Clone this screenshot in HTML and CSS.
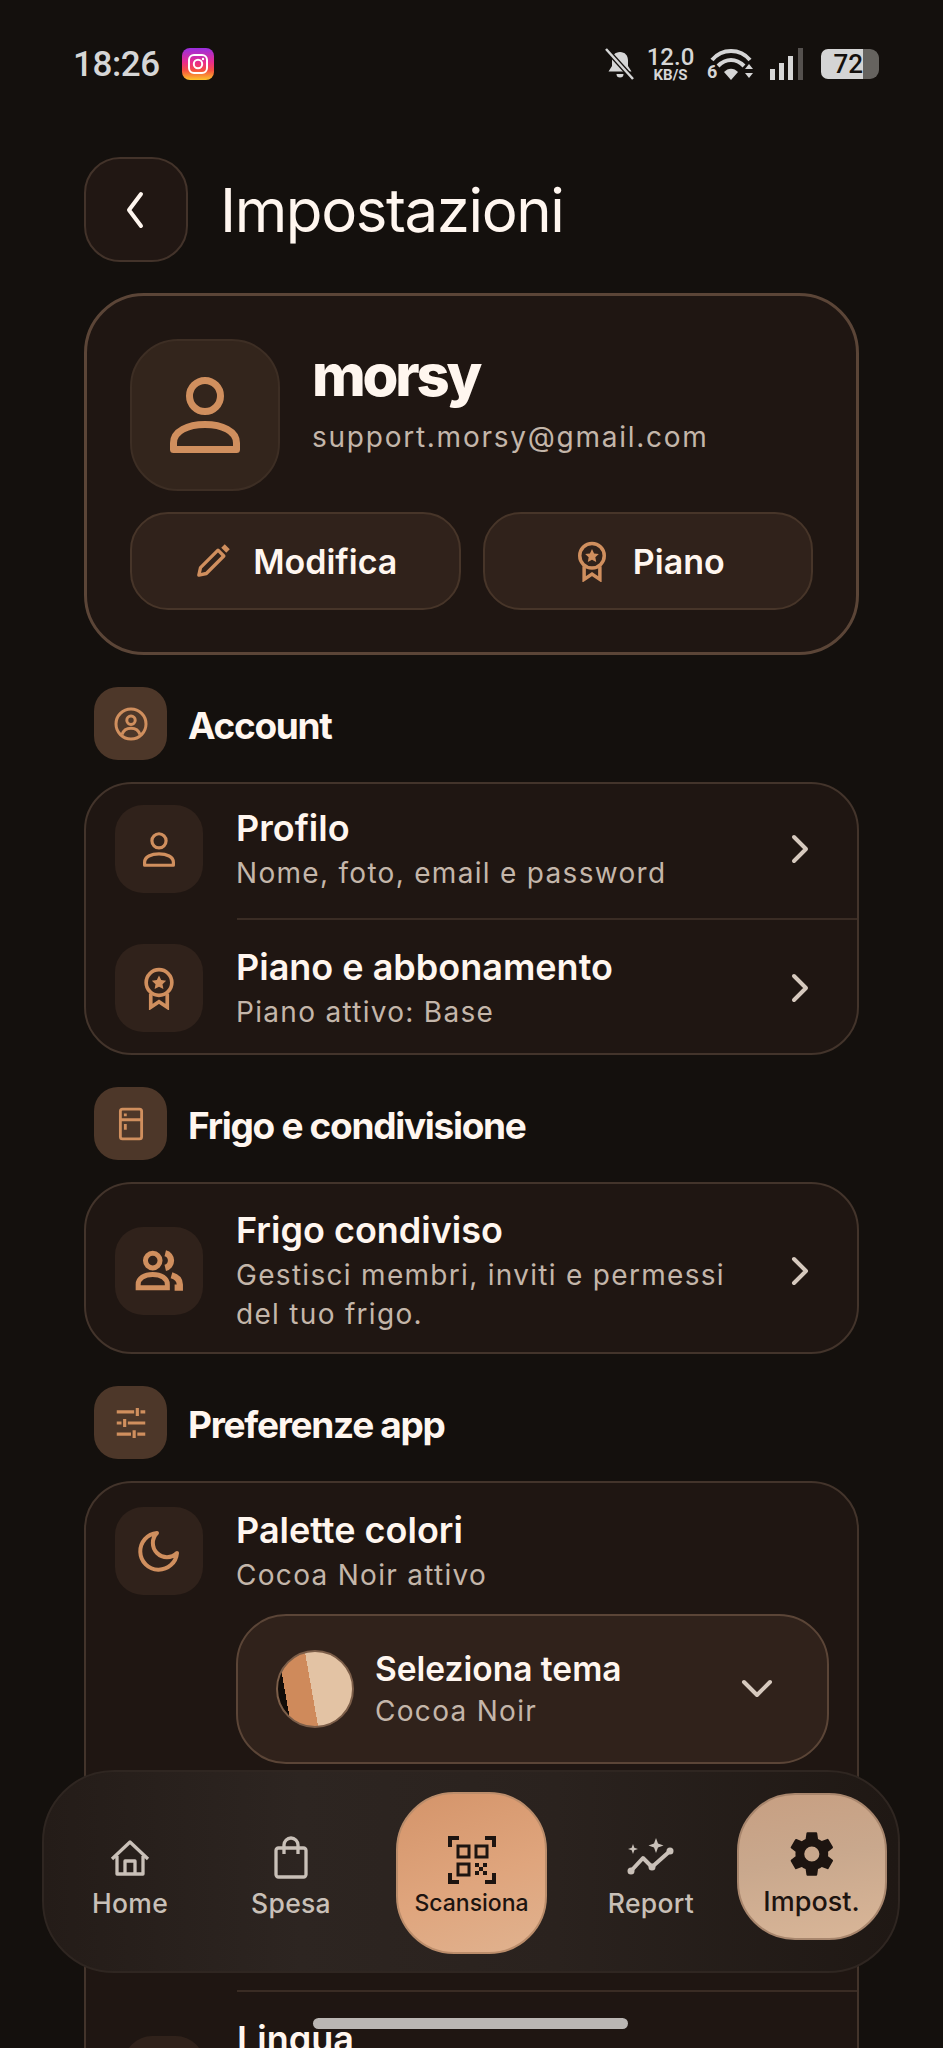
FILE: index.html
```html
<!DOCTYPE html>
<html lang="it">
<head>
    <meta charset="utf-8">
    <title>Impostazioni</title>
    <meta name="viewport" content="width=device-width, initial-scale=1.0">
    <link rel="stylesheet" href="styles.css">
</head>
<body>
<div class="screen">

    <div class="status">
        <span class="time">18:26</span>
        <span class="insta">
            <svg viewBox="0 0 32 32" width="32" height="32"><rect x="7" y="7" width="18" height="18" rx="5" fill="none" stroke="#fff" stroke-width="2"/><circle cx="16" cy="16" r="4.2" fill="none" stroke="#fff" stroke-width="2"/><circle cx="21" cy="11" r="1.2" fill="#fff"/></svg>
        </span>
        <div class="status-right">
            <svg class="st-bell" viewBox="0 0 32 32" width="32" height="32"><path d="M16 4c-5 0-8 3.500-8 8.500V18l-3.500 5.500h23L24 18v-5.500C24 7.500 21 4 16 4z" fill="#d6d6d6"/><path d="M12.500 26h7a3.500 3.500 0 0 1-7 0z" fill="#d6d6d6"/><path d="M2 1l27 30" stroke="#14100d" stroke-width="5"/><path d="M2 1l27 30" stroke="#d6d6d6" stroke-width="2.500"/></svg>
            <div class="speed"><span class="speed-num">12.0</span><span class="speed-unit">KB/S</span></div>
            <div class="wifi">
                <span class="wifi-six">6</span>
                <svg viewBox="0 0 48 32" width="48" height="32"><path d="M5 12C15 0 33 0 43 12" fill="none" stroke="#d6d6d6" stroke-width="4"/><path d="M11 18c8-8 18-8 26 0" fill="none" stroke="#d6d6d6" stroke-width="4"/><path d="M17 24c4-4.500 10-4.500 14 0l-7 8z" fill="#d6d6d6"/><path d="M38 21l4-5 4 5zM38 25l4 5 4-5z" fill="#d6d6d6"/></svg>
            </div>
            <svg class="st-signal" viewBox="0 0 34 32" width="34" height="32"><rect x="0" y="21" width="5" height="11" fill="#d6d6d6"/><rect x="9" y="15" width="5" height="17" fill="#d6d6d6"/><rect x="18" y="8" width="5" height="24" fill="#d6d6d6"/><rect x="28" y="0" width="5" height="32" fill="#55514e"/></svg>
            <div class="battery"><span class="battery-fill">72</span><span class="battery-rest"></span></div>
        </div>
    </div>

    <main class="content">
        <div class="page-head">
            <div class="back">
                <svg viewBox="0 0 32 40" width="32" height="40"><path d="M21 4L9 20l12 16" fill="none" stroke="#fff6ef" stroke-width="4" stroke-linecap="round" stroke-linejoin="round"/></svg>
            </div>
            <h1>Impostazioni</h1>
        </div>

        <section class="profile">
            <div class="profile-top">
                <div class="avatar">
                    <svg class="ico" viewBox="0 0 70 76" width="70" height="76"><circle cx="35" cy="19" r="15.500" stroke-width="7"/><path d="M3.500 72.500V66C3.500 54 18 47.500 35 47.500S66.500 54 66.500 66v6.500z" stroke-width="7" stroke-linejoin="round"/></svg>
                </div>
                <div class="who">
                    <div class="who-name">morsy</div>
                    <div class="who-mail">support.morsy@gmail.com</div>
                </div>
            </div>
            <div class="profile-btns">
                <div class="btn">
                    <svg class="ico" viewBox="0 0 24 24" width="40" height="40"><path d="M3.500 20.500l1-4.500L15 5.500 18.500 9 8 19.500z" stroke-linejoin="round"/><path d="M18 3l3 3" stroke-width="3"/></svg>
                    Modifica
                </div>
                <div class="btn">
                    <svg class="ico" viewBox="0 0 24 24" width="42" height="42"><circle cx="12" cy="9" r="7"/><path d="M12 5.200l1.200 2.500 2.700.3-2 1.900.5 2.700-2.400-1.300-2.400 1.300.5-2.700-2-1.900 2.700-.3z" fill="#d08f5e" stroke="none"/><path d="M7.500 15v7.500l4.500-3 4.500 3V15"/></svg>
                    Piano
                </div>
            </div>
        </section>

        <div class="sec-head">
            <div class="sec-ico">
                <svg class="ico" viewBox="0 0 24 24" width="36" height="36"><circle cx="12" cy="12" r="10"/><circle cx="12" cy="9.500" r="2.800"/><path d="M6 19c1-3 3.400-4.200 6-4.200s5 1.200 6 4.200"/></svg>
            </div>
            <h2>Account</h2>
        </div>
        <section class="card">
            <div class="row">
                <div class="row-ico">
                    <svg class="ico" viewBox="0 0 70 76" width="32" height="35"><circle cx="35" cy="19" r="15.500" stroke-width="7"/><path d="M3.500 72.500V66C3.500 54 18 47.500 35 47.500S66.500 54 66.500 66v6.500z" stroke-width="7" stroke-linejoin="round"/></svg>
                </div>
                <div class="row-text">
                    <div class="row-title">Profilo</div>
                    <div class="row-sub">Nome, foto, email e password</div>
                </div>
                <svg class="chev" viewBox="0 0 32 32" width="32" height="32"><path d="M9 4l12 12L9 28" fill="none" stroke="#d6c9be" stroke-width="4" stroke-linecap="round" stroke-linejoin="round"/></svg>
            </div>
            <div class="row row-next">
                <div class="row-ico">
                    <svg class="ico" viewBox="0 0 24 24" width="44" height="44"><circle cx="12" cy="9" r="7"/><path d="M12 5.200l1.200 2.500 2.700.3-2 1.900.5 2.700-2.400-1.300-2.400 1.300.5-2.700-2-1.900 2.700-.3z" fill="#d08f5e" stroke="none"/><path d="M7.500 15v7.500l4.500-3 4.500 3V15"/></svg>
                </div>
                <div class="row-text">
                    <div class="row-title">Piano e abbonamento</div>
                    <div class="row-sub">Piano attivo: Base</div>
                </div>
                <svg class="chev" viewBox="0 0 32 32" width="32" height="32"><path d="M9 4l12 12L9 28" fill="none" stroke="#d6c9be" stroke-width="4" stroke-linecap="round" stroke-linejoin="round"/></svg>
            </div>
        </section>

        <div class="sec-head">
            <div class="sec-ico">
                <svg class="ico" viewBox="0 0 24 24" width="34" height="34"><rect x="4.500" y="1.500" width="15" height="21" rx="1.500"/><path d="M4.500 9h15M8 4.500v2M8 12v4"/></svg>
            </div>
            <h2>Frigo e condivisione</h2>
        </div>
        <section class="card">
            <div class="row row-solo">
                <div class="row-ico">
                    <svg class="ico" viewBox="0 0 24 24" width="50" height="50"><circle cx="9" cy="7" r="3.500" stroke-width="2.400"/><path d="M2 20v-1.500c0-3 3-4.800 7-4.800s7 1.800 7 4.800V20z" stroke-width="2.400"/><path d="M15 3.500a3.600 3.600 0 0 1 0 7M18 14c2.500.7 4 2.200 4 4.500V20h-2.500" stroke-width="3"/></svg>
                </div>
                <div class="row-text">
                    <div class="row-title">Frigo condiviso</div>
                    <div class="row-sub">Gestisci membri, inviti e permessi<br>del tuo frigo.</div>
                </div>
                <svg class="chev" viewBox="0 0 32 32" width="32" height="32"><path d="M9 4l12 12L9 28" fill="none" stroke="#d6c9be" stroke-width="4" stroke-linecap="round" stroke-linejoin="round"/></svg>
            </div>
        </section>

        <div class="sec-head">
            <div class="sec-ico">
                <svg class="ico" viewBox="0 0 24 24" width="38" height="38"><path d="M3 5h11M18 5h3M16 2.500v5M3 12h3M10 12h11M8 9.500v5M3 19h9M16 19h5M14 16.500v5"/></svg>
            </div>
            <h2>Preferenze app</h2>
        </div>
        <section class="card">
            <div class="row row-palette">
                <div class="row-ico">
                    <svg class="ico" viewBox="0 0 24 24" width="48" height="48"><path d="M11 3a7 7 0 0 0 10 10 9.200 9.200 0 1 1-10-10z" stroke-linejoin="round"/></svg>
                </div>
                <div class="row-main">
                    <div class="row-text">
                        <div class="row-title">Palette colori</div>
                        <div class="row-sub">Cocoa Noir attivo</div>
                    </div>
                    <div class="picker">
                        <div class="swatch"></div>
                        <div class="picker-text">
                            <div class="picker-title">Seleziona tema</div>
                            <div class="picker-sub">Cocoa Noir</div>
                        </div>
                        <svg class="picker-chev" viewBox="0 0 32 22" width="32" height="22"><path d="M3 4l13 13L29 4" fill="none" stroke="#d6c9be" stroke-width="4" stroke-linecap="round" stroke-linejoin="round"/></svg>
                    </div>
                </div>
            </div>
            <div class="row row-next row-lang">
                <div class="row-ico row-ico-low"></div>
                <div class="row-text">
                    <div class="row-title">Lingua</div>
                </div>
            </div>
        </section>
    </main>

    <nav class="tabbar">
        <div class="tab">
            <svg viewBox="0 0 40 40" width="40" height="40"><path d="M2 21L20 4l18 17M7 18v18h26V18M15 36V23h10v13" fill="none" stroke="#c9c0b8" stroke-width="3.300" stroke-linejoin="round"/></svg>
            <span>Home</span>
        </div>
        <div class="tab">
            <svg viewBox="0 0 40 42" width="40" height="42"><rect x="5" y="11" width="30" height="29" rx="2.500" fill="none" stroke="#c9c0b8" stroke-width="3.300"/><path d="M13 17V8a7 7 0 0 1 14 0v9" fill="none" stroke="#c9c0b8" stroke-width="3.300"/></svg>
            <span>Spesa</span>
        </div>
        <div class="tab tab-scan">
            <svg viewBox="0 0 48 48" width="48" height="48">
                <path d="M2 11V2h9M37 2h9v9M2 37v9h9M46 37v9h-9" fill="none" stroke="#1d1410" stroke-width="4"/>
                <rect x="10" y="10" width="11" height="11" fill="none" stroke="#1d1410" stroke-width="3"/>
                <rect x="28" y="10" width="11" height="11" fill="none" stroke="#1d1410" stroke-width="3"/>
                <rect x="10" y="28" width="11" height="11" fill="none" stroke="#1d1410" stroke-width="3"/>
                <path d="M27 27h4v4h-4zM35 27h4v4h-4zM31 31h4v4h-4zM27 35h4v4h-4zM35 35h4v4h-4z" fill="#1d1410"/>
            </svg>
            <span>Scansiona</span>
        </div>
        <div class="tab">
            <svg viewBox="0 0 48 40" width="48" height="40"><path d="M4 33l12-13 9 9L43 13" fill="none" stroke="#c9c0b8" stroke-width="4" stroke-linecap="round" stroke-linejoin="round"/><circle cx="4" cy="33" r="3.500" fill="#c9c0b8"/><circle cx="25" cy="29" r="3.500" fill="#c9c0b8"/><circle cx="43" cy="13" r="3.500" fill="#c9c0b8"/><path d="M29 0l2 5.500 5.500 2-5.500 2-2 5.500-2-5.500-5.500-2 5.500-2zM6 6l1.300 3.700L11 11l-3.700 1.300L6 16l-1.300-3.700L1 11l3.700-1.300z" fill="#c9c0b8"/></svg>
            <span>Report</span>
        </div>
        <div class="tab tab-active">
            <svg viewBox="0 0 24 24" width="52" height="52"><path fill="#1d1410" d="M19.400 13c.05-.33.07-.66.07-1s-.02-.67-.07-1l2.100-1.650a.5.5 0 0 0 .12-.64l-2-3.460a.5.5 0 0 0-.61-.22l-2.490 1a7.300 7.300 0 0 0-1.730-1l-.38-2.650A.49.490 0 0 0 13.920 2h-4a.49.490 0 0 0-.49.42l-.38 2.650c-.62.25-1.200.59-1.730 1l-2.490-1a.5.5 0 0 0-.61.22l-2 3.460a.49.490 0 0 0 .12.64L4.440 11c-.05.33-.07.66-.07 1s.02.67.07 1l-2.100 1.650a.5.5 0 0 0-.12.64l2 3.460c.12.22.39.3.61.22l2.490-1c.53.4 1.110.74 1.730 1l.38 2.650c.04.24.25.42.49.42h4c.24 0 .45-.18.49-.42l.38-2.650c.62-.26 1.200-.6 1.730-1l2.490 1c.22.08.49 0 .61-.22l2-3.460a.5.5 0 0 0-.12-.64zM11.920 15.500a3.500 3.500 0 1 1 0-7 3.500 3.500 0 0 1 0 7z"/></svg>
            <span>Impost.</span>
        </div>
    </nav>

    <div class="home-pill"></div>
</div>
</body>
</html>
```

FILE: styles.css
```css
* {
    box-sizing: border-box;
    margin: 0;
}

body {
    background-color: #14100d;
    font-family: "Inter", "Liberation Sans", sans-serif;
    color: #fff6ef;
}

.screen {
    position: relative;
    width: 943px;
    height: 2048px;
    overflow: hidden;
}

/* status bar */
.status {
    display: flex;
    align-items: center;
    height: 128px;
    padding: 0 64px 0 73px;
    color: #d6d6d6;
}
.time {
    font-family: "Roboto", sans-serif;
    font-size: 35px;
    font-weight: 500;
    width: 86px;
    letter-spacing: -0.4px;
    white-space: nowrap;
}
.insta {
    display: block;
    width: 32px;
    height: 32px;
    margin-left: 23px;
    border-radius: 8px;
    background: linear-gradient(180deg, #9a2fe0 0%, #e92c8c 45%, #f5503f 70%, #fdc32a 100%);
}
.status-right {
    display: flex;
    align-items: center;
    margin-left: auto;
}
.st-bell {
    margin-right: 11px;
}
.speed {
    display: flex;
    flex-direction: column;
    align-items: center;
    width: 47px;
    margin-right: 13px;
}
.speed-num {
    font-family: "Roboto", sans-serif;
    font-size: 24px;
    font-weight: 500;
    line-height: 19px;
}
.speed-unit {
    font-family: "Roboto", sans-serif;
    font-size: 15px;
    font-weight: 700;
    line-height: 12px;
    margin-top: 2px;
}
.wifi {
    position: relative;
    width: 48px;
    margin-right: 15px;
    height: 32px;
}
.wifi-six {
    position: absolute;
    left: 0;
    bottom: -2px;
    font-family: "Roboto", sans-serif;
    font-size: 18px;
    font-weight: 700;
}
.st-signal {
    margin-right: 17px;
}
.battery {
    display: flex;
    width: 58px;
    height: 30px;
    border-radius: 7px;
    overflow: hidden;
}
.battery-fill {
    width: 42px;
    background-color: #d4d4d4;
    color: #14100d;
    font-family: "Roboto", sans-serif;
    font-size: 26px;
    font-weight: 500;
    line-height: 30px;
    text-align: right;
}
.battery-rest {
    flex: 1;
    background-color: #66635f;
    border-radius: 0 9px 9px 0;
}

/* page */
.content {
    padding: 29px 84px 0 84px;
}
.page-head {
    display: flex;
    align-items: center;
}
.back {
    display: flex;
    align-items: center;
    justify-content: center;
    width: 104px;
    height: 105px;
    background-color: #211713;
    border: 2px solid #43332a;
    border-radius: 36px;
}
h1 {
    margin-left: 32px;
    font-size: 60px;
    font-weight: 400;
    letter-spacing: -1.4px;
}

.ico {
    fill: none;
    stroke: #d08f5e;
    stroke-width: 2;
}

.profile {
    margin-top: 31px;
    height: 362px;
    padding: 43px 43px 0 43px;
    background-color: #1f1612;
    border: 3px solid #5b4537;
    border-radius: 60px;
}
.profile-top {
    display: flex;
    gap: 32px;
}
.avatar {
    display: flex;
    align-items: center;
    justify-content: center;
    width: 150px;
    height: 152px;
    background-color: #33251c;
    border: 2px solid #3d2e24;
    border-radius: 48px;
}
.who-name {
    margin-top: 5px;
    font-size: 58px;
    line-height: 62px;
    font-weight: 800;
    letter-spacing: -3.2px;
}
.who-mail {
    margin-top: 12px;
    font-size: 28px;
    line-height: 38px;
    color: #c4b6aa;
    letter-spacing: 1.75px;
}
.profile-btns {
    display: flex;
    gap: 22px;
    margin-top: 21px;
}
.btn {
    flex: 1;
    display: flex;
    align-items: center;
    justify-content: center;
    gap: 20px;
    height: 98px;
    background-color: #30221b;
    border: 2px solid #473529;
    border-radius: 38px;
    font-size: 34px;
    font-weight: 600;
}

.sec-head {
    display: flex;
    align-items: center;
    gap: 21px;
    margin: 32px 0 22px 10px;
}
.sec-ico {
    display: flex;
    align-items: center;
    justify-content: center;
    width: 73px;
    height: 73px;
    background-color: #4d3729;
    border-radius: 24px;
}
h2 {
    padding-top: 3px;
    font-size: 37px;
    font-weight: 700;
    letter-spacing: -1.3px;
}

.card {
    background-color: #1f1612;
    border: 2px solid #43342b;
    border-radius: 48px;
}
.row {
    display: flex;
    align-items: center;
    padding: 21px 0 25px 29px;
}
.row-next {
    position: relative;
    padding: 26px 0 21px 29px;
}
.row-next::before {
    content: "";
    position: absolute;
    top: 0;
    left: 151px;
    right: 0;
    height: 2px;
    background-color: #3a2c24;
}
.row-solo {
    padding-top: 23px;
    padding-bottom: 18px;
}
.row-ico {
    flex: none;
    display: flex;
    align-items: center;
    justify-content: center;
    width: 88px;
    height: 88px;
    background-color: #30221b;
    border-radius: 28px;
}
.row-text {
    flex: 1;
    margin-left: 33px;
}
.row-title {
    font-size: 36px;
    line-height: 46px;
    font-weight: 600;
}
.row-sub {
    margin-top: 3px;
    font-size: 28px;
    line-height: 39px;
    color: #c4b6aa;
    letter-spacing: 1.3px;
}
.chev {
    flex: none;
    margin-right: 40px;
}
.row-palette {
    align-items: flex-start;
    padding-top: 24px;
    padding-bottom: 226px;
}
.row-main {
    flex: 1;
}
.picker {
    display: flex;
    align-items: center;
    height: 150px;
    margin: 19px 28px 0 33px;
    padding-left: 38px;
    background-color: #30221b;
    border: 2px solid #5b4537;
    border-radius: 50px;
}
.swatch {
    flex: none;
    width: 78px;
    height: 78px;
    border: 2px solid #7c5e49;
    border-radius: 50%;
    background: linear-gradient(80deg, #120c08 15%, #cf8a5b 15%, #cf8a5b 46%, #e3c3a4 46%);
}
.picker-text {
    flex: 1;
    margin-left: 21px;
}
.picker-title {
    font-size: 33.5px;
    line-height: 44px;
    font-weight: 600;
}
.picker-sub {
    font-size: 28px;
    line-height: 40px;
    color: #c4b6aa;
    letter-spacing: 1.3px;
}
.picker-chev {
    margin-right: 54px;
}
.row-lang {
    align-items: flex-start;
    padding-left: 38px;
    padding-top: 26px;
}
.row-ico-low {
    margin-top: 20px;
    width: 80px;
}

/* tab bar */
.tabbar {
    position: absolute;
    left: 42px;
    top: 1770px;
    width: 858px;
    height: 203px;
    display: grid;
    grid-template-columns: 172px 150px 211px 148px 173px;
    align-items: start;
    background: linear-gradient(90deg, #241c18 0%, #2d2521 30%, #2a221e 60%, #1f1814 100%);
    border: 2px solid #2f2621;
    border-radius: 72px;
}
.tab {
    display: flex;
    flex-direction: column;
    align-items: center;
    padding-top: 64px;
    color: #c9c0b8;
    font-size: 26.5px;
    line-height: 30px;
    font-weight: 500;
    letter-spacing: 0.3px;
}
.tab svg {
    height: 44px;
    margin-bottom: 8px;
}
.tab-scan,
.tab-active {
    justify-self: center;
    color: #1d1410;
    letter-spacing: 0;
}
.tab-scan {
    width: 151px;
    height: 162px;
    margin-top: 20px;
    padding-top: 42px;
    font-size: 23px;
    background: linear-gradient(160deg, #d4946a 0%, #dfa57d 55%, #e0b28f 100%);
    border: 2px solid #bb8d6b;
    border-radius: 58px;
}
.tab-scan svg {
    height: 48px;
    margin-bottom: 4px;
}
.tab-active {
    width: 150px;
    height: 147px;
    margin-top: 21px;
    padding-top: 33px;
    font-size: 27px;
    background: linear-gradient(170deg, #c79f82 0%, #c9a88d 45%, #d9b698 100%);
    border: 2px solid #a8866d;
    border-radius: 58px;
}
.tab-active svg {
    height: 52px;
    margin-bottom: 7px;
}

.home-pill {
    position: absolute;
    left: 313px;
    top: 2018px;
    width: 315px;
    height: 11px;
    background-color: #bab6b3;
    border-radius: 6px;
}
```
